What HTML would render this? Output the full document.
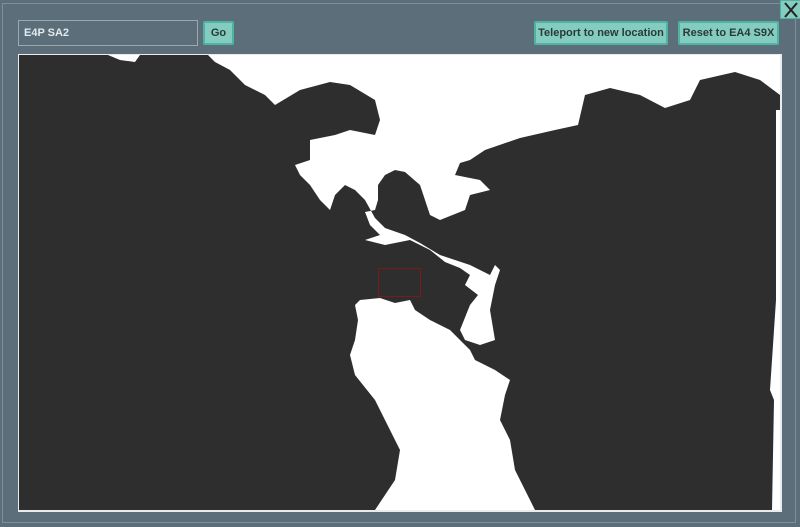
<!DOCTYPE html>
<html><head><style>
html,body{margin:0;padding:0;width:800px;height:527px;overflow:hidden;background:#5b6e7a;font-family:"Liberation Sans",sans-serif;}
.frame{position:absolute;left:2px;top:3px;width:794px;height:520px;border:1px solid #7f8f99;box-sizing:border-box;}
.inp{position:absolute;left:18px;top:20px;width:180px;height:26px;box-sizing:border-box;border:1px solid #9aa8b0;color:#e4e9ec;font-size:11px;font-weight:bold;line-height:24px;padding-left:5px;}
.btn{position:absolute;top:21px;height:24px;box-sizing:border-box;background:#83ccbf;border:2px solid #4fb3a1;border-radius:2px;color:#2a3a3a;font-size:11px;font-weight:bold;line-height:20px;text-align:center;}
.close{position:absolute;left:780px;top:0;width:22px;height:19px;background:#83ccbf;border:1px solid #4fb3a1;box-sizing:border-box;}
svg.map{position:absolute;left:18px;top:54px;}
</style></head><body>
<div class="frame"></div>
<div class="inp">E4P SA2</div>
<div class="btn" style="left:203px;width:31px;">Go</div>
<div class="btn" style="left:534px;width:134px;">Teleport to new location</div>
<div class="btn" style="left:678px;width:101px;">Reset to EA4 S9X</div>
<div class="close"><svg width="20" height="18"><path d="M4 2 L16 16 M16 2 L4 16" stroke="#222" stroke-width="2"/></svg></div>
<svg class="map" width="764" height="458" viewBox="18 54 764 458">
<rect x="18" y="54" width="764" height="458" fill="#e8ecee"/>
<rect x="19" y="55" width="761" height="455" fill="#2e2e2e"/>
<polygon fill="#fff" points="208,55 780,55 780,95 760,80 735,72 700,80 690,100 665,108 640,95 610,88 585,95 578,125 555,130 520,138 485,150 470,160 460,163 455,175 480,180 490,190 470,195 465,210 440,220 430,215 420,185 405,172 395,170 385,175 378,185 378,200 375,210 365,212 370,225 380,235 365,240 385,245 410,240 430,250 445,262 460,268 470,275 465,285 478,295 470,305 460,330 465,340 480,345 495,340 490,310 495,285 500,270 495,265 490,275 480,270 470,265 455,260 440,255 420,243 405,235 385,228 375,218 365,200 355,190 345,185 335,195 330,210 320,200 310,185 300,175 295,165 310,160 310,140 335,135 350,130 375,135 380,120 375,100 350,85 330,82 300,90 275,105 265,95 245,85 230,70 215,62"/>
<polygon fill="#fff" points="360,300 380,298 395,303 410,300 415,310 430,320 450,330 460,340 470,350 475,360 495,370 510,380 505,395 500,420 510,440 515,470 525,490 535,510 375,510 395,480 400,450 385,420 375,400 355,375 350,355 355,340 358,320 355,305"/>
<polygon fill="#fff" points="108,55 140,55 135,62 120,60"/>
<polygon fill="#fff" points="776,110 780,110 780,510 772,510 774,400 770,390 776,300"/>
<rect x="378.5" y="268.5" width="42" height="28" fill="none" stroke="#7a1a1a" stroke-width="1"/>
</svg>
</body></html>
